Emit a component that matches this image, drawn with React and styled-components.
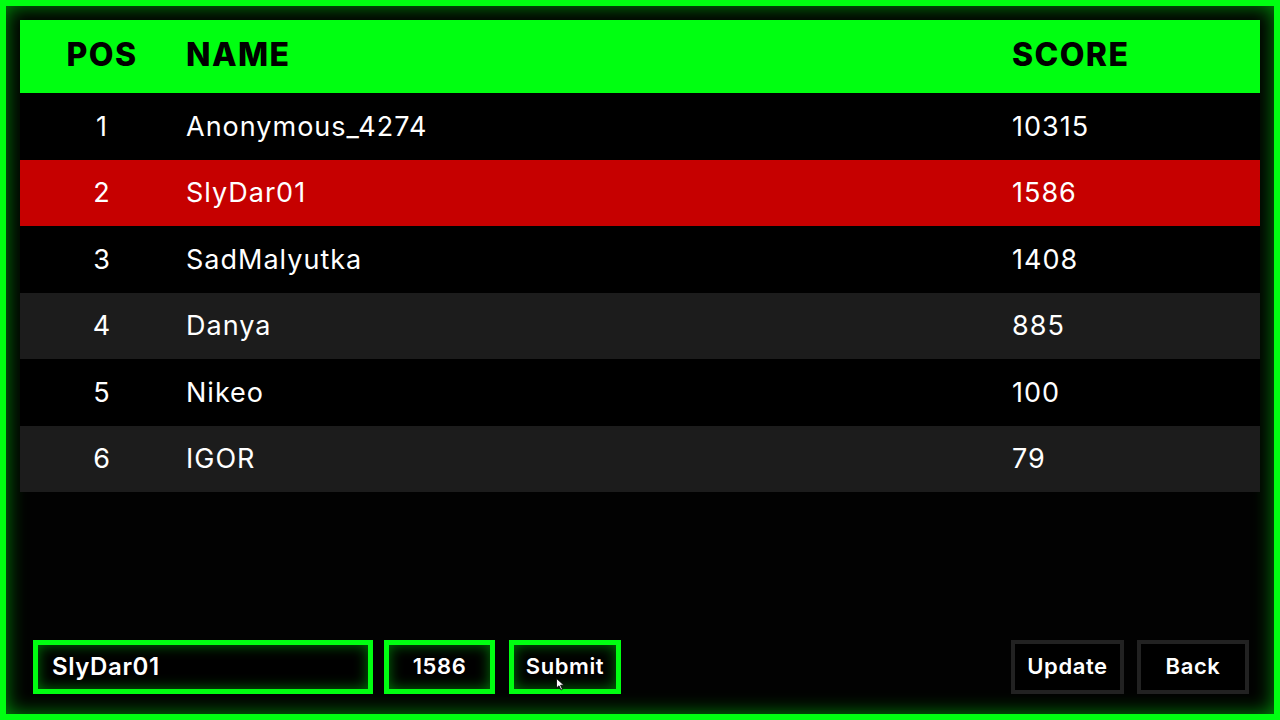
import React from "react";
import styled, { createGlobalStyle } from "styled-components";

const GlobalStyle = createGlobalStyle`
  html, body {
    margin: 0;
    padding: 0;
    background: #000;
  }
  * {
    box-sizing: border-box;
  }
`;

const GREEN = "#00ff11";

const Screen = styled.div`
  width: 1280px;
  height: 720px;
  border: 6px solid ${GREEN};
  background: #020202;
  box-shadow: inset 0 0 20px rgba(0, 255, 17, 0.55);
  padding: 14px 14px 20px;
  display: flex;
  flex-direction: column;
  font-family: Inter, "Noto Sans", sans-serif;
`;

const Table = styled.div`
  display: flex;
  flex-direction: column;
`;

const Row = styled.div`
  display: grid;
  grid-template-columns: 164px 826px 1fr;
  align-items: center;
  height: ${(p) => (p.$head ? "73px" : "66.5px")};
  padding-bottom: ${(p) => (p.$head ? "4px" : "0")};
  background: ${(p) => p.$bg};
  color: ${(p) => (p.$head ? "#000" : "#fff")};
  font-size: ${(p) => (p.$head ? "32px" : "27px")};
  font-weight: ${(p) => (p.$head ? 800 : 400)};
  letter-spacing: ${(p) => (p.$head ? "1.4px" : "1px")};
`;

const Pos = styled.div`
  text-align: center;
`;

const Cell = styled.div`
  padding-left: 2px;
`;

const Bar = styled.div`
  margin-top: auto;
  display: flex;
  align-items: center;
  padding: 0 11px 0 13px;
`;

const Group = styled.div`
  display: flex;
  gap: ${(p) => p.$gap}px;
  margin-left: ${(p) => (p.$right ? "auto" : "0")};
`;

const Field = styled.div`
  position: relative;
  width: ${(p) => p.$w}px;
  height: 54px;
  display: flex;
  align-items: center;
  justify-content: ${(p) => (p.$left ? "flex-start" : "center")};
  padding-left: ${(p) => (p.$left ? "14px" : "0")};
  padding-bottom: 2px;
  border: ${(p) => (p.$dark ? "4px solid #222" : `5px solid ${GREEN}`)};
  background: #000;
  box-shadow: ${(p) =>
    p.$dark ? "none" : "inset 0 0 14px rgba(0, 255, 17, 0.45)"};
  color: #fff;
  font-size: ${(p) => (p.$left ? "24px" : "22px")};
  font-weight: 600;
  letter-spacing: 0.6px;
`;

const Cursor = styled.svg`
  position: absolute;
  left: 42px;
  top: 33px;
  width: 9px;
  height: 13px;
`;

const rows = [
  { pos: 1, name: "Anonymous_4274", score: 10315, bg: "#000" },
  { pos: 2, name: "SlyDar01", score: 1586, bg: "#c60000" },
  { pos: 3, name: "SadMalyutka", score: 1408, bg: "#000" },
  { pos: 4, name: "Danya", score: 885, bg: "#1c1c1c" },
  { pos: 5, name: "Nikeo", score: 100, bg: "#000" },
  { pos: 6, name: "IGOR", score: 79, bg: "#1c1c1c" },
];

const App = () => {
  return (
    <>
      <GlobalStyle />
      <Screen>
        <Table>
          <Row $head $bg={GREEN}>
            <Pos>POS</Pos>
            <Cell>NAME</Cell>
            <Cell>SCORE</Cell>
          </Row>
          {rows.map((r) => (
            <Row key={r.pos} $bg={r.bg}>
              <Pos>{r.pos}</Pos>
              <Cell>{r.name}</Cell>
              <Cell>{r.score}</Cell>
            </Row>
          ))}
        </Table>
        <Bar>
          <Group $gap={11}>
            <Field $w={340} $left>SlyDar01</Field>
            <Field $w={111}>1586</Field>
            <Field $w={112} style={{ marginLeft: 3 }}>
              Submit
              <Cursor viewBox="0 0 9 13">
                <path d="M0.5 0.5 L0.5 10 L3 7.8 L5 12 L6.5 11.3 L4.6 7.2 L8 7.2 Z" fill="#fff" stroke="#000" strokeWidth="0.8" />
              </Cursor>
            </Field>
          </Group>
          <Group $right $gap={13}>
            <Field $w={113} $dark>Update</Field>
            <Field $w={112} $dark>Back</Field>
          </Group>
        </Bar>
      </Screen>
    </>
  );
};

export default App;
